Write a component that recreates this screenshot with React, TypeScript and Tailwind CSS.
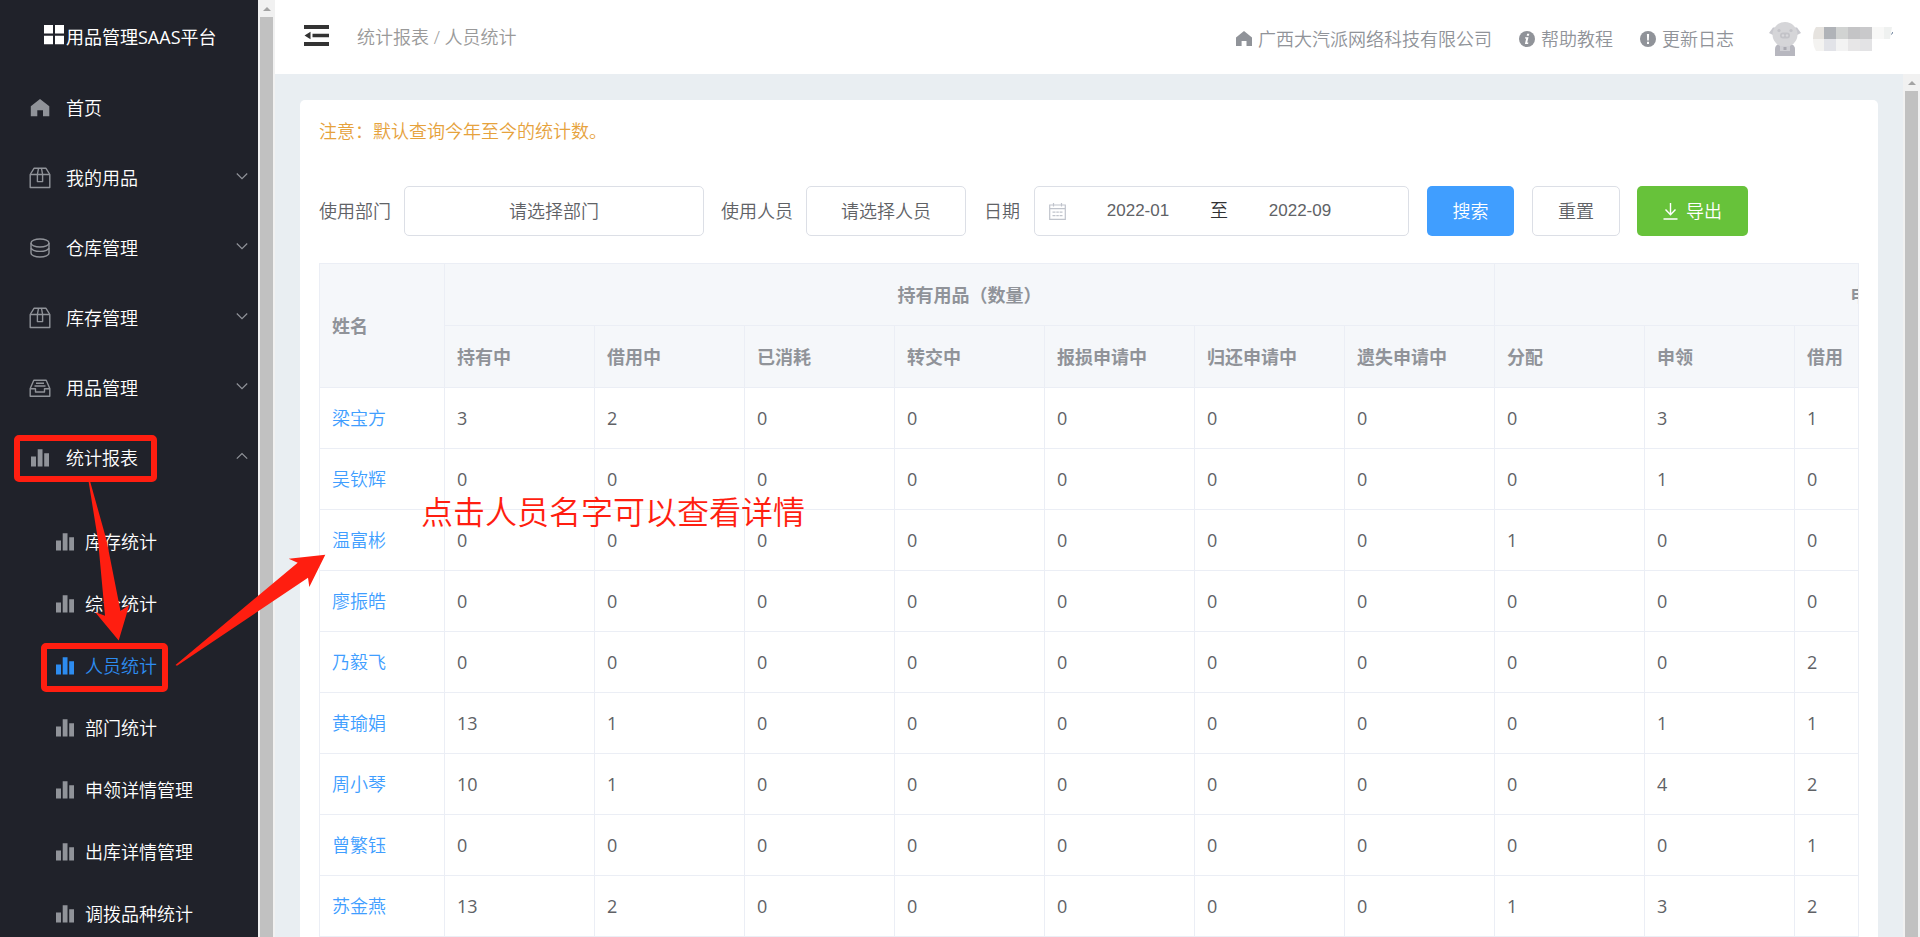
import type { ReactElement, ReactNode } from "react";
import { clsx } from "clsx";

type IconName = "home" | "box" | "coin" | "tray" | "chart";

interface MenuItem {
  label: string;
  icon: IconName;
  expandable?: boolean;
  open?: boolean;
}

interface PersonRow {
  name: string;
  values: number[];
}

const MENU: MenuItem[] = [
  { label: "首页", icon: "home" },
  { label: "我的用品", icon: "box", expandable: true },
  { label: "仓库管理", icon: "coin", expandable: true },
  { label: "库存管理", icon: "box", expandable: true },
  { label: "用品管理", icon: "tray", expandable: true },
  { label: "统计报表", icon: "chart", expandable: true, open: true },
];

const REPORTS = [
  "库存统计",
  "综合统计",
  "人员统计",
  "部门统计",
  "申领详情管理",
  "出库详情管理",
  "调拨品种统计",
];

const ACTIVE_REPORT = "人员统计";

const COLUMNS = [
  "持有中",
  "借用中",
  "已消耗",
  "转交中",
  "报损申请中",
  "归还申请中",
  "遗失申请中",
  "分配",
  "申领",
  "借用",
];

const ROWS: PersonRow[] = [
  { name: "梁宝方", values: [3, 2, 0, 0, 0, 0, 0, 0, 3, 1] },
  { name: "吴钦辉", values: [0, 0, 0, 0, 0, 0, 0, 0, 1, 0] },
  { name: "温富彬", values: [0, 0, 0, 0, 0, 0, 0, 1, 0, 0] },
  { name: "廖振皓", values: [0, 0, 0, 0, 0, 0, 0, 0, 0, 0] },
  { name: "乃毅飞", values: [0, 0, 0, 0, 0, 0, 0, 0, 0, 2] },
  { name: "黄瑜娟", values: [13, 1, 0, 0, 0, 0, 0, 0, 1, 1] },
  { name: "周小琴", values: [10, 1, 0, 0, 0, 0, 0, 0, 4, 2] },
  { name: "曾繁钰", values: [0, 0, 0, 0, 0, 0, 0, 0, 0, 1] },
  { name: "苏金燕", values: [13, 2, 0, 0, 0, 0, 0, 1, 3, 2] },
];

function Icon({ name, className }: { name: IconName; className?: string }): ReactElement {
  const stroke = {
    fill: "none",
    stroke: "currentColor",
    strokeWidth: 1.4,
    strokeLinejoin: "round" as const,
  };

  return (
    <svg viewBox="0 0 22 22" className={clsx("size-[22px] shrink-0", className)} aria-hidden>
      {name === "home" && (
        <path fill="currentColor" d="M11 2 20.3 9.2V19.2H14V13.2H8.3V19.2H1.8V9.2Z" />
      )}
      {name === "box" && (
        <g {...stroke}>
          <path d="M1.2 7.5 5 1.3H17L20.8 7.5V20.5H1.2Z" />
          <path d="M1.2 7.5H20.8M9.5 1.3 8.4 7.5V14.6H13.6V7.5L12.5 1.3" />
        </g>
      )}
      {name === "coin" && (
        <g {...stroke}>
          <ellipse cx="11" cy="6" rx="9" ry="4" />
          <path d="M2 6V10.5C2 12.7 6 14.4 11 14.4S20 12.7 20 10.5V6" />
          <path d="M2 11V16C2 18.2 6 20 11 20S20 18.2 20 16V11" />
        </g>
      )}
      {name === "tray" && (
        <g {...stroke}>
          <path d="M1.2 11.5 4.8 3.2H17.2L20.8 11.5V19.3H1.2Z" />
          <path d="M1.2 11.8H6.5V15H15.5V11.8H20.8M7 6.3H15M5.5 9H16.5" />
        </g>
      )}
      {name === "chart" && (
        <path fill="currentColor" d="M2 9.5H7V19.5H2ZM8.7 2.3H13.5V19.5H8.7ZM15.2 6.3H20V19.5H15.2Z" />
      )}
    </svg>
  );
}

function Chevron({ open }: { open?: boolean }): ReactElement {
  return (
    <svg
      viewBox="0 0 12 12"
      className="mr-[10px] mb-1 ml-auto size-3 shrink-0 text-[#909399]"
      aria-hidden
    >
      <path
        d={open ? "M.8 8.7 6 3.5 11.2 8.7" : "M.8 3.5 6 8.7 11.2 3.5"}
        fill="none"
        stroke="currentColor"
        strokeWidth="1.2"
      />
    </svg>
  );
}

function Scrollbar(): ReactElement {
  return (
    <div className="flex w-[17px] shrink-0 flex-col items-center bg-[#f1f1f1]" aria-hidden>
      <div className="flex h-[17px] shrink-0 items-center">
        <svg viewBox="0 0 8 4" className="h-1 w-2 text-[#a3a3a3]">
          <path d="M4 0 8 4H0Z" fill="currentColor" />
        </svg>
      </div>
      <div className="w-[13px] flex-1 bg-[#c1c1c1]" />
    </div>
  );
}

function Sidebar(): ReactElement {
  return (
    <aside className="flex w-[275px] shrink-0">
      <div className="flex-1 overflow-hidden bg-[#20222a] text-white">
        <div className="flex h-[73px] items-center gap-[2px] pl-11">
          <svg viewBox="0 0 20 20" className="mb-1 size-5" aria-hidden>
            <path fill="currentColor" d="M0 0H9V8.5H0ZM11 0H20V8.5H11ZM0 10.8H9V19.3H0ZM11 10.8H20V19.3H11Z" />
          </svg>
          <span className="font-normal whitespace-nowrap">用品管理SAAS平台</span>
        </div>
        <nav>
          <ul>
            {MENU.map((item) => (
              <li key={item.label}>
                <a href="#" className="flex h-[70px] items-center pl-[29px]">
                  <Icon name={item.icon} className="mr-[15px] text-[#909399]" />
                  {item.label}
                  {item.expandable && <Chevron open={item.open} />}
                </a>
              </li>
            ))}
          </ul>
          <ul className="pt-[18px]">
            {REPORTS.map((label) => (
              <li key={label}>
                <a
                  href="#"
                  className={clsx(
                    "flex h-[62px] items-center gap-[9px] pl-[54px]",
                    label === ACTIVE_REPORT && "text-[#2d8cf0]",
                  )}
                >
                  <Icon
                    name="chart"
                    className={label === ACTIVE_REPORT ? "text-[#2d8cf0]" : "text-[#909399]"}
                  />
                  {label}
                </a>
              </li>
            ))}
          </ul>
        </nav>
      </div>
      <Scrollbar />
    </aside>
  );
}

function HeaderLink({ icon, children }: { icon: ReactNode; children: ReactNode }): ReactElement {
  return (
    <a href="#" className="flex items-center gap-[6px] whitespace-nowrap">
      <svg viewBox="0 0 16 16" className="size-4 shrink-0" aria-hidden>
        {icon}
      </svg>
      {children}
    </a>
  );
}

function Avatar(): ReactElement {
  return (
    <svg viewBox="0 0 32 34" className="h-[34px] w-8 shrink-0" aria-hidden>
      <path fill="#b7b7bf" d="M6 34V27C6 23 10 21 16 21S26 23 26 27V34Z" />
      <path fill="#c8c8ce" d="M0 11 4 5.5H28L32 11 28 13H4Z" />
      <circle cx="16" cy="12.5" r="12.5" fill="#d5d5d8" />
      <circle cx="10" cy="8.5" r="1.6" fill="#c3c3c8" />
      <circle cx="22" cy="8.5" r="1.6" fill="#c3c3c8" />
      <rect x="11" y="10.5" width="10" height="6" rx="3" fill="#c3c3c8" />
      <circle cx="14" cy="13.5" r="1.2" fill="#d9d9dc" />
      <circle cx="18" cy="13.5" r="1.2" fill="#d9d9dc" />
      <path fill="#cfcfd4" d="M11 24H21V29H11Z" />
      <path fill="#a9a9b1" d="M14.5 25H17.5V28H14.5Z" />
    </svg>
  );
}

// user name is masked
function MaskedName(): ReactElement {
  return (
    <svg viewBox="0 0 80 24" className="h-6 w-20 shrink-0" aria-hidden>
      <path fill="#e6e3df" d="M3 0H11V12H0Q0 4 3 0Z" />
      <path fill="#f4f3f1" d="M0 12H11V24H3Q0 19 0 12Z" />
      <path fill="#b0b3b8" d="M11 0H23V12H11Z" />
      <path fill="#e2e3e8" d="M11 12H23V24H11Z" />
      <path fill="#d1d3d2" d="M23 0H35V12H23Z" />
      <path fill="#f3f3f3" d="M23 12H35V24H23Z" />
      <path fill="#c4c4c6" d="M35 0H47V12H35Z" />
      <path fill="#e7e6e7" d="M35 12H47V24H35Z" />
      <path fill="#c9c9cb" d="M47 0H59V12H47Z" />
      <path fill="#e3e3e5" d="M47 12H59V24H47Z" />
      <path fill="#f8f8f7" d="M59 0H71V12H59Z" />
      <path fill="#eff1f0" d="M71 0H79L77 12H71Z" />
      <path stroke="#5b7290" d="M78.5 7.5 80 5" />
    </svg>
  );
}

function TopBar(): ReactElement {
  return (
    <header className="flex h-[74px] shrink-0 items-center bg-white pr-[27px] pl-[29px]">
      <button type="button" aria-label="收起菜单" className="mb-1">
        <svg viewBox="0 0 25 21" className="h-[21px] w-[25px] text-[#333333]" aria-hidden>
          <path
            fill="currentColor"
            d="M0 0H25V4H0ZM8.5 8.7H25V12.3H8.5ZM0 17H25V21H0ZM.5 10.5 6.5 6.7V14.3Z"
          />
        </svg>
      </button>
      <nav className="ml-7 whitespace-nowrap text-[#999999]">统计报表 / 人员统计</nav>
      <div className="ml-auto flex items-center gap-[27px] pt-1 text-[#909399]">
        <HeaderLink icon={<path fill="currentColor" d="M8 0 16 6.4V15H10.5V10H5.6V15H0V6.4Z" />}>
          广西大汽派网络科技有限公司
        </HeaderLink>
        <HeaderLink
          icon={
            <>
              <circle cx="8" cy="8" r="8" fill="currentColor" />
              <path fill="#fff" d="M8.1 2.8H10.3L9.9 4.8H7.7ZM6.2 6.2H9.5L8.2 11.6H9.4L9.1 12.9H5.9L7.2 7.5H5.9Z" />
            </>
          }
        >
          帮助教程
        </HeaderLink>
        <HeaderLink
          icon={
            <>
              <circle cx="8" cy="8" r="8" fill="currentColor" />
              <path fill="#fff" d="M6.9 3H9.1L8.8 9.5H7.2ZM7 10.8H9V12.9H7Z" />
            </>
          }
        >
          更新日志
        </HeaderLink>
        <div className="ml-2 flex items-center gap-3">
          <Avatar />
          <MaskedName />
        </div>
      </div>
    </header>
  );
}

function Filters(): ReactElement {
  return (
    <form className="mt-[42px] flex items-center whitespace-nowrap text-[#606266]">
      <label htmlFor="department">使用部门</label>
      <button
        id="department"
        type="button"
        className="ml-[13px] h-[50px] w-[300px] rounded-[5px] border border-[#dcdfe6]"
      >
        请选择部门
      </button>
      <label htmlFor="person" className="ml-[17px]">
        使用人员
      </label>
      <button
        id="person"
        type="button"
        className="ml-[13px] h-[50px] w-[160px] rounded-[5px] border border-[#dcdfe6]"
      >
        请选择人员
      </button>
      <label htmlFor="month-from" className="ml-[18px]">
        日期
      </label>
      <div className="ml-[14px] flex h-[50px] w-[375px] items-center rounded-[5px] border border-[#dcdfe6] pl-[14px] font-['Liberation_Sans','Noto_Sans_CJK_SC',sans-serif]">
        <svg viewBox="0 0 17 17" className="size-[17px] shrink-0 text-[#c0c4cc]" aria-hidden>
          <path
            d="M.7 2H16.3V16.3H.7ZM.7 5.6H16.3M4.5 0V3.4M12.5 0V3.4M3.5 9.2H6.5M7.3 9.2H9.8M10.6 9.2H13.5M3.5 12.6H6.5M7.3 12.6H9.8M10.6 12.6H13.5"
            fill="none"
            stroke="currentColor"
            strokeWidth="1.2"
          />
        </svg>
        <input
          id="month-from"
          type="text"
          defaultValue="2022-01"
          className="w-[144px] text-center text-[17px]"
        />
        <span className="text-[#303133]">至</span>
        <input
          type="text"
          aria-label="结束月份"
          defaultValue="2022-09"
          className="w-[144px] text-center text-[17px]"
        />
      </div>
      <button type="submit" className="ml-[18px] h-[50px] w-[87px] rounded-[5px] bg-[#409eff] text-white">
        搜索
      </button>
      <button type="reset" className="ml-[18px] h-[50px] w-[88px] rounded-[5px] border border-[#dcdfe6]">
        重置
      </button>
      <button
        type="button"
        className="ml-[17px] flex h-[50px] w-[111px] items-center justify-center gap-2 rounded-[5px] bg-[#67c23a] text-white"
      >
        <svg viewBox="0 0 15 17" className="h-[17px] w-[15px]" aria-hidden>
          <path
            d="M7.5 0V11.5M2.5 6.5 7.5 11.7 12.5 6.5M.5 16H14.5"
            fill="none"
            stroke="currentColor"
            strokeWidth="1.4"
          />
        </svg>
        导出
      </button>
    </form>
  );
}

function StatsTable(): ReactElement {
  const cell = "border-r border-b border-[#ebeef5] pl-3 text-left";

  return (
    <div className="mt-[27px] overflow-hidden border-t border-r border-l border-[#ebeef5]">
      <table className="w-[2067px] table-fixed border-separate border-spacing-0 text-[#606266]">
        <colgroup>
          <col className="w-[125px]" />
          {COLUMNS.map((column) => (
            <col key={column} className="w-[150px]" />
          ))}
          <col className="w-[442px]" />
        </colgroup>
        <thead className="bg-[#f5f7fa] text-[#909399]">
          <tr className="h-[62px]">
            <th rowSpan={2} className={cell}>
              姓名
            </th>
            <th colSpan={7} className="border-r border-b border-[#ebeef5] text-center">
              持有用品（数量）
            </th>
            <th colSpan={4} className="border-r border-b border-[#ebeef5] text-center">
              申领过的用品（数量）
            </th>
          </tr>
          <tr className="h-[62px]">
            {COLUMNS.map((column) => (
              <th key={column} className={cell}>
                {column}
              </th>
            ))}
            <th className={cell} />
          </tr>
        </thead>
        <tbody>
          {ROWS.map((row) => (
            <tr key={row.name} className="h-[61px]">
              <td className={cell}>
                <a href="#" className="text-[#409eff]">
                  {row.name}
                </a>
              </td>
              {row.values.map((value, i) => (
                <td key={COLUMNS[i]} className={clsx(cell, "font-normal")}>
                  {value}
                </td>
              ))}
              <td className={cell} />
            </tr>
          ))}
        </tbody>
      </table>
    </div>
  );
}

function Annotations(): ReactElement {
  return (
    <div className="pointer-events-none absolute inset-0">
      <div className="absolute top-[435px] left-[14px] h-[47px] w-[143px] rounded-[5px] border-[6px] border-[#ff1e10]" />
      <div className="absolute top-[643px] left-[41px] h-[49px] w-[127px] rounded-[5px] border-[6px] border-[#ff1e10]" />
      <svg viewBox="0 0 340 700" className="absolute top-0 left-0 h-[700px] w-[340px]" aria-hidden>
        <path
          fill="#ff1e10"
          d="M88.5 481H90L106.5 540 120.5 611 129.3 605 118.7 640.5 95 612 105 615.7 98 540Z"
        />
        <path
          fill="#ff1e10"
          d="M175.5 665 297.7 562.7 288.7 558.7 325.3 554.7 309.3 587 308 577.7 177 665.7Z"
        />
      </svg>
      <p className="absolute top-[488px] left-[421px] text-[32px] leading-[48px] whitespace-nowrap text-[#ff1e10]">
        点击人员名字可以查看详情
      </p>
    </div>
  );
}

export default function App(): ReactElement {
  return (
    <div className="relative flex h-screen overflow-hidden bg-[#e9eef2] font-['Open_Sans','Noto_Sans_CJK_SC',sans-serif] text-[18px] leading-[26px] font-[350]">
      <Sidebar />
      <div className="flex min-w-0 flex-1 flex-col">
        <TopBar />
        <div className="flex min-h-0 flex-1">
          <main className="min-w-0 flex-1 overflow-hidden pt-[26px] pr-[25px] pl-[25px]">
            <section className="rounded-[5px] bg-white px-[19px] pt-[18px] pb-5">
              <p className="text-[#e6a23c]">注意：默认查询今年至今的统计数。</p>
              <Filters />
              <StatsTable />
            </section>
          </main>
          <Scrollbar />
        </div>
      </div>
      <Annotations />
    </div>
  );
}
